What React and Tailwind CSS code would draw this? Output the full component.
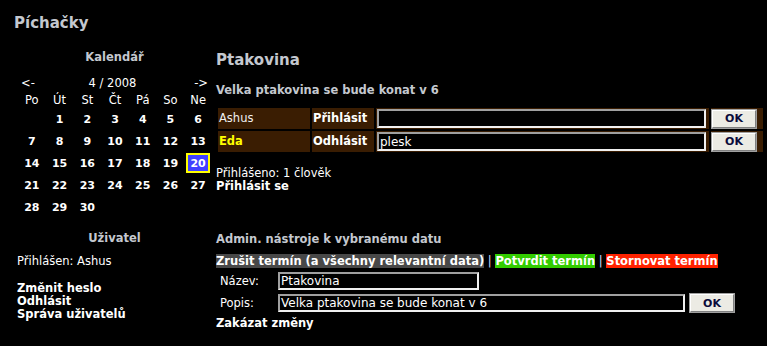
const days = ["Po", "Út", "St", "Čt", "Pá", "So", "Ne"];

// April 2008 starts on Tuesday
const cells = [null, ...Array.from({ length: 30 }, (_, i) => i + 1)];

const heading = "font-bold text-[#c4c8cf]";

function Btn({ className = "" }) {
  return (
    <button
      className={`h-[18px] w-[44px] bg-[#ecebe4] border border-t-[#fff] border-l-[#fff] border-r-[#808080] border-b-[#808080] outline outline-1 outline-[#a0a0a0] text-[11px] font-bold text-[#0a0a3a] leading-none ${className}`}
    >
      OK
    </button>
  );
}

function Field({ value, className = "" }) {
  return (
    <div
      className={`bg-black border-2 border-t-[#a0a0a0] border-l-[#a0a0a0] border-r-[#f0f0f0] border-b-[#f0f0f0] text-white text-[12px] leading-none flex items-center px-[1px] ${className}`}
    >
      {value}
    </div>
  );
}

function Calendar() {
  return (
    <div className="flex flex-col">
      <div className={`${heading} h-[14px] leading-[14px] text-center`}>Kalendář</div>
      <div className="mt-[12px] h-[14px] leading-[14px] flex justify-between pl-[4px] pr-[4px] text-white">
        <span>&lt;-</span>
        <span className="-ml-[4px]">4 / 2008</span>
        <span>-&gt;</span>
      </div>
      <div className="mt-[1px] ml-[1px] grid grid-cols-7 w-[194px]">
        {days.map((d) => (
          <div key={d} className="h-[18px] leading-[18px] text-center text-white">
            {d}
          </div>
        ))}
      </div>
      <div className="ml-[1px] grid grid-cols-7 gap-y-[2px] w-[194px] text-[11px]">
        {cells.map((n, i) => (
          <div key={i} className="h-[20px] flex items-center justify-center font-bold text-white">
            {n === 20 ? (
              <span className="w-[24px] h-[20px] border-2 border-[#ffff00] bg-[#4040ff] flex items-center justify-center">
                20
              </span>
            ) : (
              n
            )}
          </div>
        ))}
      </div>
    </div>
  );
}

function AttendRow({ name, nameClass, action, note }) {
  return (
    <div className="flex gap-[2px] h-[21px]">
      <div className={`w-[92px] bg-[#3a1d02] flex items-center pl-[1px] ${nameClass}`}>{name}</div>
      <div className="w-[62px] bg-[#3a1d02] flex items-center pl-[1px] font-bold text-white">{action}</div>
      <div className="w-[333px] bg-[#3a1d02] flex items-center pl-[1px]">
        <Field value={note} className="w-[329px] h-[19px]" />
      </div>
      <div className="flex-1 bg-[#3a1d02] flex items-center pl-[1px]">
        <Btn />
      </div>
    </div>
  );
}

export default function App() {
  return (
    <div
      className="w-[767px] h-[346px] bg-black text-[11.5px] leading-[13px] overflow-hidden"
      style={{ fontFamily: '"DejaVu Sans", Verdana, sans-serif' }}
    >
      <div className={`${heading} text-[15px] leading-[18px] pl-[14px] pt-[14px] h-[50px]`}>Píchačky</div>

      <div className="grid grid-cols-[195px_1fr] gap-x-[4px] pl-[17px] pr-[4px]">
        {/* LEFT: calendar */}
        <div className="h-[182px]">
          <Calendar />
        </div>

        {/* RIGHT: event */}
        <div className="flex flex-col">
          <div className={`${heading} text-[15px] leading-[18px] pt-[1px]`}>Ptakovina</div>
          <div className={`${heading} mt-[15px]`}>Velka ptakovina se bude konat v 6</div>
          <div className="mt-[11px] flex flex-col gap-[2px] pl-[2px]">
            <AttendRow name="Ashus" nameClass="text-[#f0f0f0]" action="Přihlásit" note="" />
            <AttendRow name="Eda" nameClass="text-[#ffff00] font-bold" action="Odhlásit" note="plesk" />
          </div>
          <div className="mt-[15px] text-white">Přihlášeno: 1 člověk</div>
          <div className="font-bold text-white">Přihlásit se</div>
        </div>

        {/* LEFT: user */}
        <div className="flex flex-col">
          <div className={`${heading} text-center`}>Uživatel</div>
          <div className="mt-[10px] text-white">Přihlášen: Ashus</div>
          <div className="mt-[14px] font-bold text-white">Změnit heslo</div>
          <div className="font-bold text-white">Odhlásit</div>
          <div className="font-bold text-white">Správa uživatelů</div>
        </div>

        {/* RIGHT: admin */}
        <div className="flex flex-col">
          <div className={`${heading} mt-[1px]`}>Admin. nástroje k vybranému datu</div>
          <div className="mt-[8px] h-[14px] flex items-center font-bold text-white whitespace-pre">
            <span className="bg-[#484848] h-[14px] leading-[14px]">Zrušit termín (a všechny relevantní data)</span>
            <span className="font-normal text-[#d8dcff]"> | </span>
            <span className="bg-[#33cc00] h-[14px] leading-[14px]">Potvrdit termín</span>
            <span className="font-normal text-[#d8dcff]"> | </span>
            <span className="bg-[#ff2200] h-[14px] leading-[14px]">Stornovat termín</span>
          </div>
          <div className="mt-[4px] flex items-center h-[18px]">
            <span className="w-[62px] pl-[4px] text-white">Název:</span>
            <Field value="Ptakovina" className="w-[201px] h-[18px]" />
          </div>
          <div className="mt-[4px] flex items-center h-[18px]">
            <span className="w-[62px] pl-[4px] text-white">Popis:</span>
            <Field value="Velka ptakovina se bude konat v 6" className="w-[407px] h-[18px]" />
            <Btn className="ml-[5px]" />
          </div>
          <div className="mt-[5px] font-bold text-white">Zakázat změny</div>
        </div>
      </div>
    </div>
  );
}
